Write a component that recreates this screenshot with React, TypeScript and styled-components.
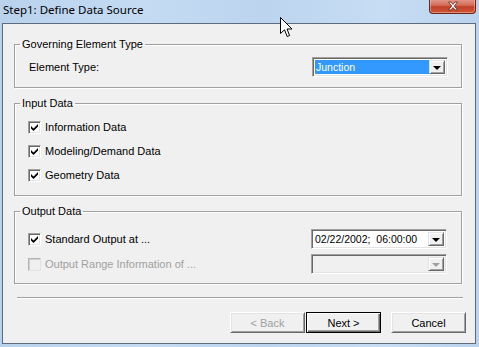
import React from 'react';
import styled, { createGlobalStyle } from 'styled-components';

const GlobalStyle = createGlobalStyle`
  html, body {
    margin: 0;
    padding: 0;
    background: #bfd7f0;
  }
  * {
    box-sizing: border-box;
  }
`;

const Window = styled.div`
  position: relative;
  width: 479px;
  height: 347px;
  display: flex;
  flex-direction: column;
  background: linear-gradient(90deg, #b9d2ec 0%, #c4dbf3 30%, #bcd4ee 55%, #c6ddf4 80%, #bad2ec 100%);
  overflow: hidden;
`;

const TitleBar = styled.div`
  height: 23px;
  display: flex;
  justify-content: space-between;
  align-items: flex-start;
  padding: 0 3px 0 3px;
`;

const Title = styled.div`
  font-family: 'Noto Sans', sans-serif;
  font-size: 11.5px;
  line-height: 20px;
  color: #000;
`;

const CloseButton = styled.div`
  width: 47px;
  height: 15px;
  margin-top: -1px;
  border: 1px solid #6e2418;
  border-top: none;
  border-radius: 0 0 4px 4px;
  background: linear-gradient(180deg, #e29a8c 0%, #d46c58 45%, #c2402a 55%, #cf5637 100%);
  box-shadow: inset 0 0 0 1px rgba(255, 220, 210, 0.4);
  display: flex;
  align-items: center;
  justify-content: center;
`;

const Client = styled.div`
  flex: 1;
  margin: 0 3px 3px 2px;
  border: 1px solid #5d6b7c;
  background: #f0f0f0;
  display: flex;
  flex-direction: column;
  padding: 13px 13px 0 11px;
  font-family: 'Liberation Sans', Arial, sans-serif;
  font-size: 11px;
  color: #000;
`;

const Group = styled.fieldset<{ $pad: string }>`
  margin: 0 0 8px 0;
  padding: ${(p) => p.$pad};
  border: 1px solid #a0a0a0;
  box-shadow: inset 1px 1px 0 #fff, 1px 1px 0 #fff;
  min-width: 0;
`;

const Legend = styled.legend`
  padding: 0 2px;
  margin-left: 5px;
  line-height: 14px;
  height: 14px;
  font-size: 11px;
`;

const GroupBody = styled.div<{ $left: number }>`
  padding-left: ${(p) => p.$left}px;
`;

const Row = styled.div<{ $h?: number }>`
  display: flex;
  align-items: center;
  justify-content: space-between;
  height: ${(p) => p.$h ?? 20}px;
`;

const Stack = styled.div<{ $gap: number }>`
  display: flex;
  flex-direction: column;
  gap: ${(p) => p.$gap}px;
`;

const Label = styled.span<{ $disabled?: boolean }>`
  color: ${(p) => (p.$disabled ? '#a0a0a0' : '#000')};
  white-space: nowrap;
`;

const CheckLine = styled.label`
  display: flex;
  align-items: center;
  gap: 4px;
`;

const Box = styled.span<{ $disabled?: boolean }>`
  width: 13px;
  height: 13px;
  display: inline-flex;
  align-items: center;
  justify-content: center;
  background: ${(p) => (p.$disabled ? '#f0f0f0' : '#fff')};
  border-style: solid;
  border-width: 1px;
  border-color: ${(p) =>
    p.$disabled ? '#b4b4b4 #e3e3e3 #e3e3e3 #b4b4b4' : '#a0a0a0 #fff #fff #a0a0a0'};
  box-shadow: ${(p) =>
    p.$disabled ? 'inset 1px 1px 0 #d0d0d0' : 'inset 1px 1px 0 #696969, inset -1px -1px 0 #e3e3e3'};
`;

const Combo = styled.div<{ $disabled?: boolean }>`
  width: 136px;
  height: 20px;
  display: flex;
  border-style: solid;
  border-width: 1px;
  border-color: #a0a0a0 #fff #fff #a0a0a0;
  box-shadow: inset 1px 1px 0 #696969, inset -1px -1px 0 #e3e3e3;
  background: ${(p) => (p.$disabled ? '#f0f0f0' : '#fff')};
  padding: 2px;
`;

const ComboText = styled.div<{ $selected?: boolean }>`
  flex: 1;
  padding-left: 1px;
  line-height: 14px;
  font-size: 10.5px;
  font-family: 'Liberation Sans', Arial, sans-serif;
  white-space: pre;
  overflow: hidden;
  background: ${(p) => (p.$selected ? '#3399ff' : 'transparent')};
  color: ${(p) => (p.$selected ? '#fff' : '#000')};
`;

const ComboButton = styled.div`
  width: 16px;
  height: 14px;
  display: flex;
  align-items: center;
  justify-content: center;
  background: #f0f0f0;
  border-style: solid;
  border-width: 1px;
  border-color: #e3e3e3 #696969 #696969 #e3e3e3;
  box-shadow: inset 1px 1px 0 #fff, inset -1px -1px 0 #a0a0a0;
`;

const Arrow = styled.span<{ $disabled?: boolean }>`
  width: 0;
  height: 0;
  border-left: 4px solid transparent;
  border-right: 4px solid transparent;
  border-top: 4px solid ${(p) => (p.$disabled ? '#a0a0a0' : '#000')};
  margin-top: 1px;
`;

const Separator = styled.div`
  height: 2px;
  margin: 5px -1px 0 3px;
  border-top: 1px solid #a0a0a0;
  border-bottom: 1px solid #fff;
`;

const ButtonBar = styled.div`
  display: flex;
  justify-content: flex-end;
  margin: 13px -4px 0 0;
`;

const Button = styled.button<{ $default?: boolean; $gapLeft?: number }>`
  width: 75px;
  height: 21px;
  margin-left: ${(p) => p.$gapLeft ?? 0}px;
  padding: 0;
  font-family: 'Liberation Sans', Arial, sans-serif;
  font-size: 11px;
  color: #000;
  background: #f0f0f0;
  border-style: solid;
  border-width: 1px;
  border-color: ${(p) => (p.$default ? '#000' : '#fff #696969 #696969 #fff')};
  box-shadow: ${(p) =>
    p.$default
      ? 'inset 1px 1px 0 #fff, inset -1px -1px 0 #696969, inset -2px -2px 0 #a0a0a0'
      : 'inset 1px 1px 0 #e3e3e3, inset -1px -1px 0 #a0a0a0'};
  &:disabled {
    color: #a0a0a0;
  }
`;

const Cursor = styled.svg`
  position: absolute;
  left: 280px;
  top: 17px;
`;

function Check() {
  return (
    <svg width="9" height="9" viewBox="0 0 9 9">
      <path d="M1 3 L3.5 5.5 L8 1 L8 3.5 L3.5 8 L1 5.5 Z" fill="#000" />
    </svg>
  );
}

function CheckItem({ label, checked, disabled }: { label: string; checked?: boolean; disabled?: boolean }) {
  return (
    <CheckLine>
      <Box $disabled={disabled}>{checked && <Check />}</Box>
      <Label $disabled={disabled}>{label}</Label>
    </CheckLine>
  );
}

function ComboBox({ value, selected, disabled }: { value?: string; selected?: boolean; disabled?: boolean }) {
  return (
    <Combo $disabled={disabled}>
      <ComboText $selected={selected}>{value}</ComboText>
      <ComboButton>
        <Arrow $disabled={disabled} />
      </ComboButton>
    </Combo>
  );
}

export default function App() {
  return (
    <>
      <GlobalStyle />
      <Window>
        <TitleBar>
          <Title>Step1: Define Data Source</Title>
          <CloseButton>
            <svg width="12" height="10" viewBox="0 0 12 10">
              <path
                d="M1.5 1 L4 1 L6 3.5 L8 1 L10.5 1 L7.3 5 L10.5 9 L8 9 L6 6.5 L4 9 L1.5 9 L4.7 5 Z"
                fill="#fff"
                stroke="#5a2218"
                strokeWidth="0.8"
              />
            </svg>
          </CloseButton>
        </TitleBar>
        <Client>
          <Group $pad="6px 13px 10px 0">
            <Legend>Governing Element Type</Legend>
            <GroupBody $left={14}>
              <Row>
                <Label>Element Type:</Label>
                <ComboBox value="Junction" selected />
              </Row>
            </GroupBody>
          </Group>
          <Group $pad="5px 13px 8px 0">
            <Legend>Input Data</Legend>
            <GroupBody $left={13}>
              <Stack $gap={0}>
                <Row $h={24}>
                  <CheckItem label="Information Data" checked />
                </Row>
                <Row $h={24}>
                  <CheckItem label="Modeling/Demand Data" checked />
                </Row>
                <Row $h={24}>
                  <CheckItem label="Geometry Data" checked />
                </Row>
              </Stack>
            </GroupBody>
          </Group>
          <Group $pad="11px 14px 9px 0">
            <Legend>Output Data</Legend>
            <GroupBody $left={13}>
              <Stack $gap={5}>
                <Row>
                  <CheckItem label="Standard Output at ..." checked />
                  <ComboBox value="02/22/2002;  06:00:00" />
                </Row>
                <Row>
                  <CheckItem label="Output Range Information of ..." disabled />
                  <ComboBox disabled />
                </Row>
              </Stack>
            </GroupBody>
          </Group>
          <Separator />
          <ButtonBar>
            <Button disabled>&lt; Back</Button>
            <Button $default $gapLeft={1}>
              Next &gt;
            </Button>
            <Button $gapLeft={10}>Cancel</Button>
          </ButtonBar>
        </Client>
        <Cursor width="13" height="21" viewBox="0 0 13 21">
          <path
            d="M0.5 0.5 L0.5 16.5 L4.5 12.8 L7.2 19.5 L9.6 18.5 L7 12 L12 12 Z"
            fill="#fff"
            stroke="#000"
            strokeWidth="1"
            strokeLinejoin="miter"
          />
        </Cursor>
      </Window>
    </>
  );
}
